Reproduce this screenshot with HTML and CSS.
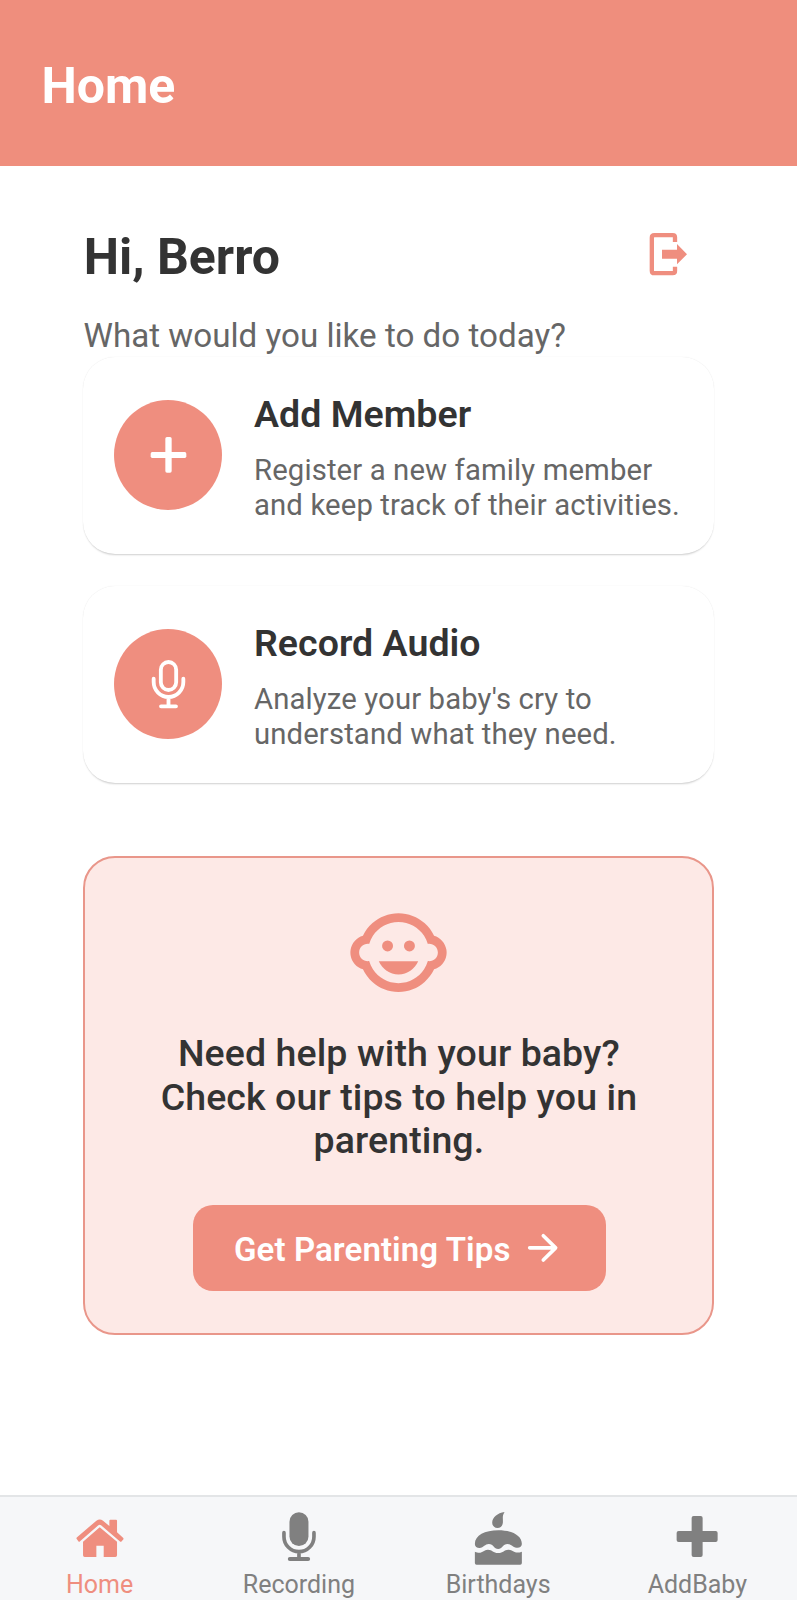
FILE: index.html
```html
<!DOCTYPE html>
<html lang="en">
<head>
<meta charset="utf-8">
<title>Home</title>
<link rel="stylesheet" href="styles.css">
</head>
<body>
<div class="app">
  <header class="topbar"><h1 class="topbar-title">Home</h1></header>
  <main class="content">
    <div class="greeting">
      <h2 class="hello">Hi, Berro</h2>
      <svg class="logout" viewBox="264 96 120 132" aria-hidden="true">
        <path d="M345 126V112Q345 105.500 338 105.500H283Q275.500 105.500 275.500 113V212Q275.500 219.500 283 219.500H338Q345 219.500 345 213V200" fill="none" stroke="currentColor" stroke-width="13"/>
        <path d="M306 149H351V132L381 162.500L351 193V176H306Z" fill="currentColor"/>
      </svg>
    </div>
    <p class="prompt">What would you like to do today?</p>

    <section class="card">
      <svg class="badge" viewBox="133 180 324 330" aria-hidden="true">
        <ellipse cx="295" cy="345" rx="162" ry="165" fill="#ef8e7f"/>
        <rect x="243" y="336" width="107" height="18" rx="5" fill="#fff"/>
        <rect x="287" y="291" width="19" height="107" rx="5" fill="#fff"/>
      </svg>
      <div class="card-body">
        <h3 class="card-title">Add Member</h3>
        <p class="card-text">Register a new family member<br>and keep track of their activities.</p>
      </div>
    </section>

    <section class="card">
      <svg class="badge" viewBox="133 176 324 330" aria-hidden="true">
        <ellipse cx="295" cy="341" rx="162" ry="165" fill="#ef8e7f"/>
        <g fill="none" stroke="#fff" stroke-width="11.500" stroke-linecap="round">
          <rect x="273.500" y="275" width="46" height="84" rx="23"/>
          <path d="M252 325V335A44.500 45 0 0 0 341 335V325M296.500 380V408M274 408H319"/>
        </g>
      </svg>
      <div class="card-body">
        <h3 class="card-title">Record Audio</h3>
        <p class="card-text">Analyze your baby's cry to<br>understand what they need.</p>
      </div>
    </section>

    <section class="tips">
      <svg class="face" viewBox="0 0 24 24" fill="currentColor" aria-hidden="true">
        <path d="M22.940 12.660c.04-.21.06-.43.06-.66s-.02-.45-.06-.66c-.25-1.510-1.360-2.740-2.810-3.170-.53-1.120-1.280-2.100-2.190-2.910C16.360 3.850 14.280 3 12 3s-4.360.85-5.940 2.260c-.92.81-1.670 1.800-2.190 2.910-1.450.43-2.560 1.650-2.810 3.170-.04.21-.06.43-.06.66s.02.45.06.66c.25 1.510 1.360 2.740 2.810 3.170.52 1.110 1.270 2.090 2.170 2.890C7.620 20.140 9.710 21 12 21s4.380-.86 5.970-2.280c.9-.8 1.650-1.790 2.170-2.890 1.440-.43 2.550-1.650 2.800-3.170zM19 14c-.1 0-.19-.02-.29-.03-.2.67-.49 1.290-.86 1.860C16.600 17.740 14.450 19 12 19s-4.600-1.260-5.850-3.170c-.37-.57-.66-1.190-.86-1.860-.1.010-.19.030-.29.030-1.100 0-2-.9-2-2s.9-2 2-2c.1 0 .19.020.29.030.2-.67.49-1.290.86-1.860C7.400 6.260 9.550 5 12 5s4.600 1.260 5.850 3.170c.37.57.66 1.190.86 1.860.1-.010.19-.030.29-.030 1.100 0 2 .9 2 2s-.9 2-2 2z"/>
        <circle cx="9.500" cy="10.500" r="1.250"/><circle cx="14.500" cy="10.500" r="1.250"/>
        <path d="M7.500 14c.76 1.770 2.490 3 4.500 3s3.740-1.230 4.500-3z"/>
      </svg>
      <p class="tips-text">Need help with your baby?<br>Check our tips to help you in<br>parenting.</p>
      <button class="tips-button">
        <span>Get Parenting Tips</span>
        <svg class="arrow" viewBox="382 640 94 90" fill="none" stroke="currentColor" stroke-width="11" stroke-linecap="round" stroke-linejoin="round" aria-hidden="true">
          <path d="M390 684.500H468M431 648L468 684.500L431 721"/>
        </svg>
      </button>
    </section>
  </main>

  <nav class="tabs">
    <a class="tab tab-active">
      <svg class="tab-icon" viewBox="214.900 90 168 168" fill="currentColor" aria-hidden="true">
        <path d="M229 177Q227 175 230 172L288 122Q298 115 308 122L327 138V122Q327 119 330 119H347Q350 119 350 122V157L368 173Q371 176 368 179L364 184Q361 187 358 184L302 136Q298 133 294 136L239 184Q236 187 234 184Z"/>
        <path d="M298 142L350 185V226Q350 231 345 231H310V197H288V231H253Q248 231 248 226V185Z"/>
      </svg>
      <span>Home</span>
    </a>
    <a class="tab">
      <svg class="tab-icon" viewBox="812.600 90 168 168" fill="currentColor" aria-hidden="true">
        <rect x="868" y="97" width="57" height="101" rx="28.500"/>
        <path d="M851.500 158V170A45 45 0 0 0 941.500 170V158M896.500 215V234" fill="none" stroke="currentColor" stroke-width="11" stroke-linecap="round"/>
        <rect x="863" y="231" width="67" height="12" rx="6"/>
      </svg>
      <span>Recording</span>
    </a>
    <a class="tab">
      <svg class="tab-icon" viewBox="210.400 90 168 168" fill="currentColor" aria-hidden="true">
        <path d="M314 96C306 109 310 115 309 128C308 138 302 144 293 144C283 144 277 137 277 128C277 112 293 99 314 96Z"/>
        <path d="M225 192C225 166 255 151 295.500 151S366 166 366 192C366 200 359 204 350 203C338 202 335 192 323 192C309 192 307 207 295 207C282 207 281 192 267 192C255 192 252 203 239 204C231 204 225 200 225 192Z"/>
        <path d="M225 215C246 224 251 210 263 209C277 208 279 219 295 219C311 219 313 208 327 209C340 210 345 223 366 215V249Q366 254 361 254H230Q225 254 225 249Z"/>
      </svg>
      <span>Birthdays</span>
    </a>
    <a class="tab">
      <svg class="tab-icon" viewBox="808.100 90 168 168" fill="currentColor" aria-hidden="true">
        <rect x="831" y="153" width="123" height="33" rx="6"/>
        <rect x="876" y="108" width="33" height="123" rx="6"/>
      </svg>
      <span>AddBaby</span>
    </a>
  </nav>
</div>
</body>
</html>
```
FILE: styles.css
```css
* { box-sizing: border-box; }
body, h1, h2, h3, p { margin: 0; }
body {
  background: #fff;
  color: #333;
  font-family: Roboto, "Liberation Sans", sans-serif;
}
.app { display: flex; flex-direction: column; height: 1600px; overflow: hidden; }

.topbar { flex: none; height: 166px; padding: 57px 41.500px 0; background: #ef8e7d; }
.topbar-title { font-size: 50px; line-height: 58px; font-weight: 700; color: #fff; }

.content { flex: 1; padding: 62px 83px 0; }
.greeting { display: flex; justify-content: space-between; align-items: flex-start; padding-right: 26px; }
.hello { padding-left: 0.700px; font-size: 50px; line-height: 58px; font-weight: 700; }
.logout { width: 40px; height: 44px; margin-top: 4px; color: #ef8e7f; }
.prompt { margin: 30px 0 1px; padding-left: 0.500px; font-size: 33.200px; line-height: 40px; color: #666; white-space: nowrap; }

.card {
  display: flex;
  align-items: flex-start;
  gap: 32px;
  height: 197px;
  margin-bottom: 32px;
  padding: 35px 0 0 31px;
  border-radius: 32px;
  background: #fff;
  box-shadow: 0 2px 2px -1px rgba(0, 0, 0, .18), 0 0 1px rgba(0, 0, 0, .12);
}
.badge { flex: none; width: 108px; height: 110px; margin-top: 8px; }
.card-body { white-space: nowrap; }
.card-title { font-size: 37.500px; line-height: 44px; font-weight: 600; letter-spacing: 0.030px; }
.card-text { margin-top: 17px; font-size: 29.300px; line-height: 34.500px; letter-spacing: 0.120px; color: #666; }

.tips {
  display: flex;
  flex-direction: column;
  align-items: center;
  height: 479px;
  margin-top: 73px;
  padding-top: 42px;
  border: 2px solid #e9968a;
  border-radius: 32px;
  background: #fde9e6;
}
.face { width: 105px; height: 105px; color: #ef8e7f; }
.tips-text { margin-top: 27px; padding-left: 0.800px; font-size: 37.500px; line-height: 43.600px; font-weight: 500; letter-spacing: 0.090px; text-align: center; white-space: nowrap; }
.tips-button {
  display: flex;
  align-items: center;
  justify-content: space-between;
  width: 413px;
  height: 86px;
  margin: 42px 0 0 1px;
  padding: 0 47px 0 41.500px;
  border: 0;
  border-radius: 20px;
  background: #ef8e7f;
  color: #fff;
  font: 600 33px/40px Roboto, "Liberation Sans", sans-serif;
  letter-spacing: 0.100px;
  white-space: nowrap;
}
.tips-button span { padding-top: 4px; }
.arrow { width: 31.300px; height: 30px; }

.tabs {
  flex: none;
  display: grid;
  grid-template-columns: repeat(4, 1fr);
  height: 105px;
  border-top: 2px solid #e3e5e7;
  background: #f6f7f9;
  color: #808080;
}
.tab { display: flex; flex-direction: column; align-items: center; gap: 3.500px; padding-top: 13px; font-size: 25px; line-height: 30px; }
.tab-active { color: #ef8e7f; }
.tab-icon { width: 56px; height: 56px; }
```
